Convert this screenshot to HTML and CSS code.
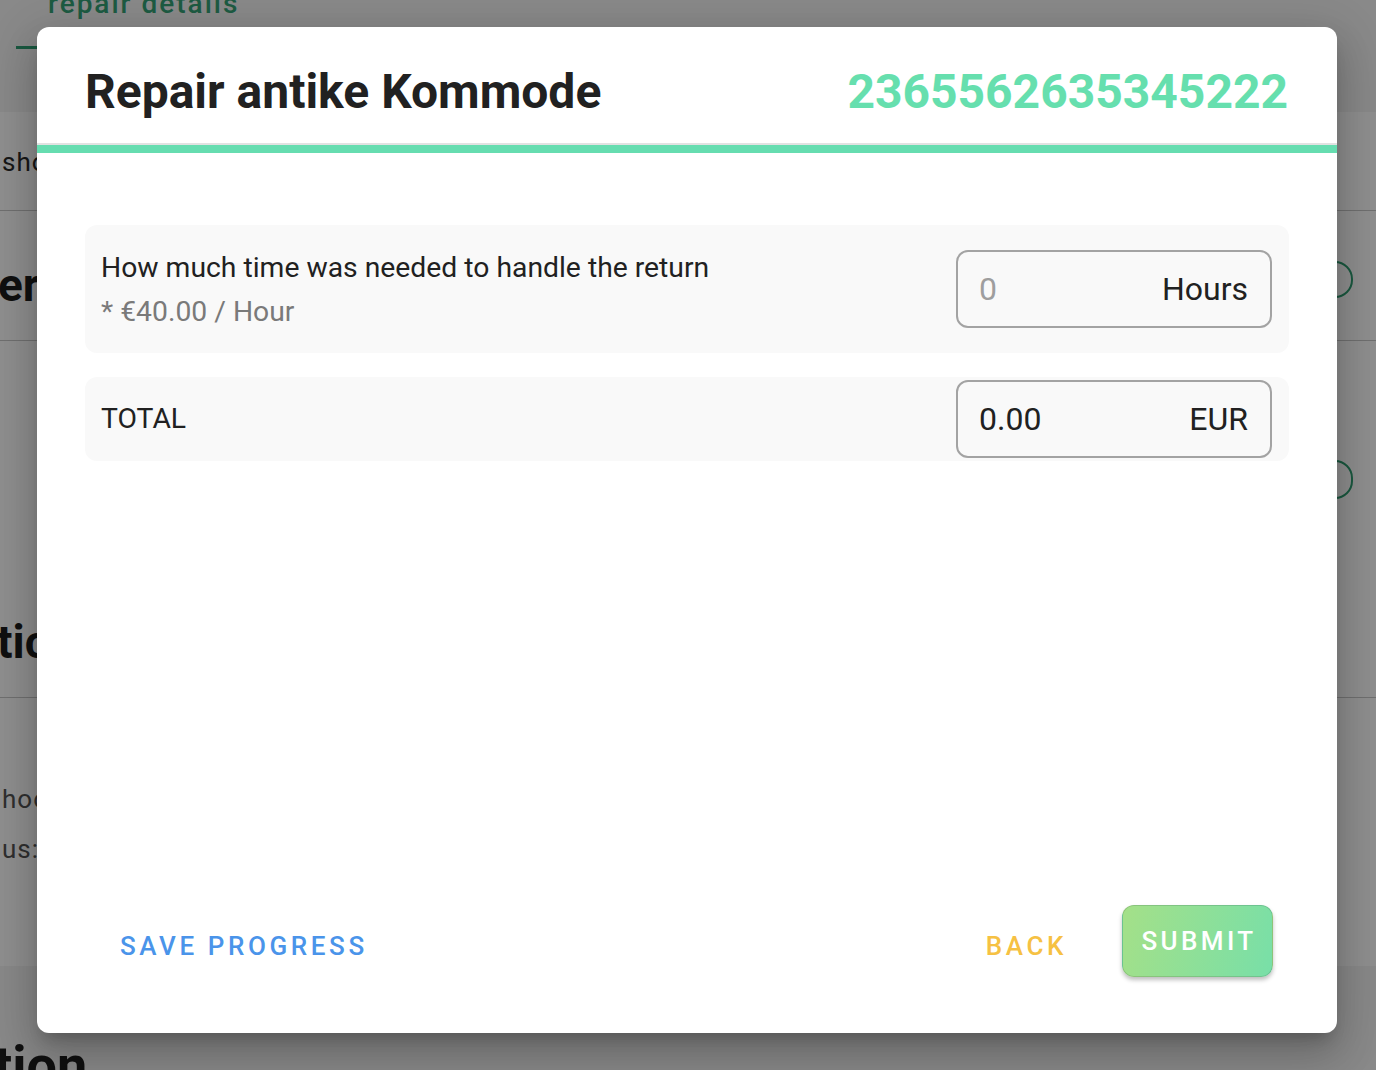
FILE: index.html
```html
<!DOCTYPE html>
<html lang="en">
<head>
<meta charset="utf-8">
<title>Repair antike Kommode</title>
<link rel="stylesheet" href="styles.css">
</head>
<body>
<div class="page">
  <div class="bg-header">
    <div class="bg-tab">repair details</div>
  </div>
  <div class="bg-row bg-row-a"><span class="bg-text">shop</span></div>
  <div class="bg-row bg-row-b">
    <h2 class="bg-title">er</h2>
    <span class="bg-outline"></span>
  </div>
  <div class="bg-row bg-row-c">
    <div class="bg-c-btn"><span class="bg-outline"></span></div>
    <h2 class="bg-title">tic</h2>
  </div>
  <div class="bg-row bg-row-d">
    <p class="bg-text">hoo</p>
    <p class="bg-text">us:</p>
  </div>
  <div class="bg-row bg-row-e"><h2 class="bg-title">tion</h2></div>

  <div class="overlay"></div>

  <div class="modal">
    <header class="modal-header">
      <h1 class="modal-title">Repair antike Kommode</h1>
      <span class="modal-number">2365562635345222</span>
    </header>
    <div class="modal-divider"></div>
    <div class="modal-body">
      <div class="field-row field-row-tall">
        <div class="field-label">
          <div class="label-main">How much time was needed to handle the return</div>
          <div class="label-sub">* €40.00 / Hour</div>
        </div>
        <div class="field-input">
          <span class="value placeholder">0</span>
          <span class="unit">Hours</span>
        </div>
      </div>
      <div class="field-row field-row-short">
        <div class="field-label">
          <div class="label-main">TOTAL</div>
        </div>
        <div class="field-input">
          <span class="value">0.00</span>
          <span class="unit">EUR</span>
        </div>
      </div>
    </div>
    <footer class="modal-footer">
      <button class="btn-text btn-save">SAVE PROGRESS</button>
      <div class="footer-right">
        <button class="btn-text btn-back">BACK</button>
        <button class="btn-submit">SUBMIT</button>
      </div>
    </footer>
  </div>
</div>
</body>
</html>
```

FILE: styles.css
```css
* { box-sizing: border-box; }
html, body { margin: 0; padding: 0; }
body {
  font-family: Roboto, "Noto Sans", "Liberation Sans", sans-serif;
  background: #ffffff;
}
.page {
  position: relative;
  width: 1376px;
  height: 1070px;
  overflow: hidden;
  background: #ffffff;
}

/* background page (dimmed) */
.bg-header {
  display: flow-root;
  height: 112px;
  background: #f4f4f4;
}
.bg-tab {
  margin-left: 16px;
  margin-top: -10px;
  width: 320px;
  height: 59px;
  padding-left: 32px;
  border-bottom: 3px solid #2f9f72;
  font-size: 28px;
  line-height: 28px;
  letter-spacing: 2px;
  color: #34a277;
  font-weight: 500;
}
.bg-row { border-bottom: 1px solid #c8c8c8; }
.bg-row-a { height: 99px; padding-top: 30px; }
.bg-text {
  margin: 0;
  font-size: 26px;
  line-height: 50px;
  color: #3a3a3a;
  letter-spacing: 1px;
  padding-left: 2px;
}
.bg-row-a .bg-text { line-height: 40px; color: #2a2a2a; }
.bg-row-b {
  height: 130px;
  display: flex;
  justify-content: space-between;
  align-items: flex-start;
  padding-top: 50px;
  padding-right: 23px;
}
.bg-title {
  margin: 0;
  font-size: 46px;
  line-height: 56px;
  font-weight: 700;
  color: #1e1e1e;
}
.bg-row-b .bg-title { margin-top: -4px; margin-left: -2px; }
.bg-outline {
  display: block;
  width: 120px;
  height: 37px;
  border: 2px solid #2f9f72;
  border-radius: 18px;
}
.bg-row-c {
  height: 357px;
  padding-top: 119px;
}
.bg-c-btn { display: flex; justify-content: flex-end; padding-right: 23px; height: 154px; }
.bg-c-btn .bg-outline { height: 39px; }
.bg-row-c .bg-title { margin-left: -3px; }
.bg-row-d {
  height: 268px;
  padding-top: 76px;
  border-bottom: none;
}
.bg-row-d .bg-text { color: #555; }
.bg-row-e {
  height: 200px;
  background: #f5f5f5;
  padding-top: 72px;
  border-bottom: none;
}
.bg-row-e .bg-title { font-size: 54px; margin-left: -6px; }

.overlay {
  position: absolute;
  inset: 0;
  background: rgba(0, 0, 0, 0.44);
}

/* modal */
.modal {
  position: absolute;
  left: 37px;
  top: 27px;
  width: 1300px;
  height: 1006px;
  background: #ffffff;
  border-radius: 12px;
  display: flex;
  flex-direction: column;
  box-shadow: 0 11px 15px -7px rgba(0,0,0,0.2), 0 24px 38px 3px rgba(0,0,0,0.14), 0 9px 46px 8px rgba(0,0,0,0.12);
}
.modal-header {
  height: 116px;
  padding: 41px 49px 0 48px;
  display: flex;
  justify-content: space-between;
  align-items: flex-start;
}
.modal-title {
  margin: 0;
  font-size: 48px;
  line-height: 48px;
  font-weight: 700;
  color: #212121;
}
.modal-number {
  font-size: 48px;
  line-height: 48px;
  font-weight: 700;
  color: #66dfae;
}
.modal-divider {
  height: 10px;
  border-top: 2px solid #e2e2e2;
  background: #66ddb0;
}
.modal-body {
  flex: 1;
  padding: 72px 48px 0;
  display: flex;
  flex-direction: column;
  gap: 24px;
}
.field-row {
  background: #f9f9f9;
  border-radius: 12px;
  padding: 0 17px 0 16px;
  display: flex;
  align-items: center;
  justify-content: space-between;
}
.field-row-tall { height: 128px; }
.field-row-short { height: 84px; }
.label-main {
  font-size: 28.3px;
  line-height: 44px;
  color: #212121;
}
.field-row-tall .field-label { margin-top: 2px; }
.label-sub {
  font-size: 28.3px;
  line-height: 44px;
  color: #7a7a7a;
}
.field-input {
  width: 316px;
  height: 78px;
  border: 2px solid #a3a3a3;
  border-radius: 12px;
  padding: 0 22px 0 21px;
  display: flex;
  align-items: center;
  justify-content: space-between;
  font-size: 32px;
  color: #212121;
}
.field-input .placeholder { color: #9e9e9e; }

.modal-footer {
  height: 128px;
  padding: 0 64px 56px 83px;
  display: flex;
  align-items: center;
  justify-content: space-between;
}
.btn-text {
  border: none;
  background: none;
  padding: 0;
  margin-top: 10px;
  font-family: Roboto, "Noto Sans", "Liberation Sans", sans-serif;
  font-size: 26px;
  font-weight: 500;
  letter-spacing: 3.6px;
  line-height: 30px;
}
.btn-save { color: #4a94ea; }
.btn-back { color: #f6c143; }
.footer-right {
  display: flex;
  align-items: center;
  gap: 55px;
}
.btn-submit {
  width: 151px;
  height: 72px;
  border: 1px solid rgba(0,0,0,0.12);
  border-radius: 12px;
  background: linear-gradient(105deg, #a4e088 0%, #78dfa8 100%);
  box-shadow: 0 3px 4px rgba(0,0,0,0.25);
  color: #ffffff;
  font-family: Roboto, "Noto Sans", "Liberation Sans", sans-serif;
  font-size: 26px;
  font-weight: 500;
  letter-spacing: 3.4px;
  padding: 0 0 0 3px;
}
```
